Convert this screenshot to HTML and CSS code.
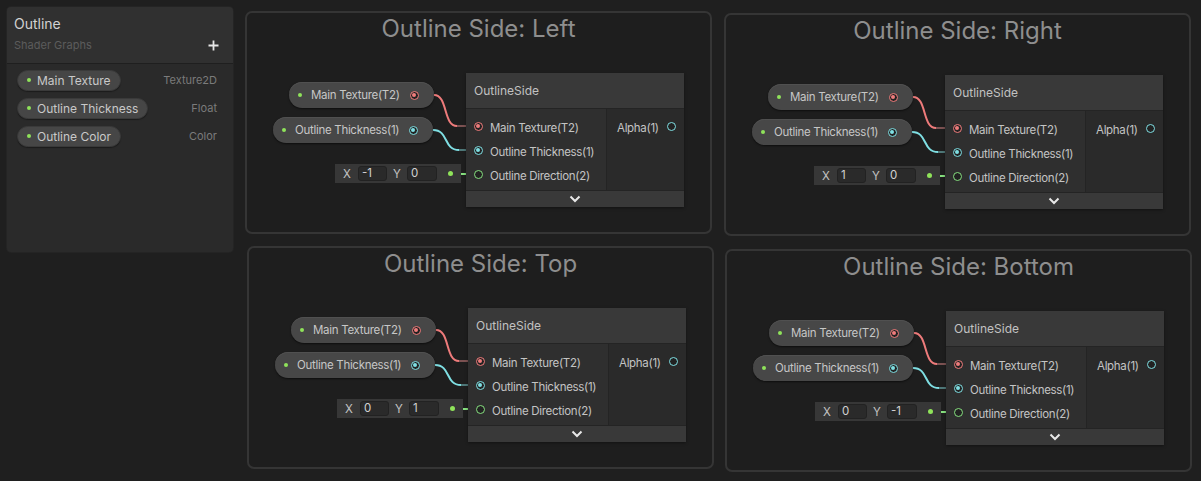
FILE: index.html
```html
<!DOCTYPE html>
<html>
<head>
<meta charset="utf-8">
<link rel="stylesheet" href="styles.css">
</head>
<body>
<div class="canvas">
  <aside class="blackboard">
    <div class="bb-header">
      <div class="bb-title">Outline</div>
      <div class="bb-sub"><span>Shader Graphs</span>
        <svg class="plus" width="11" height="11" viewBox="0 0 11 11"><path d="M5.5 0.5V10.5M0.5 5.5H10.5" stroke="#e6e6e6" stroke-width="1.8"/></svg>
      </div>
    </div>
    <div class="bb-body">
      <div class="bb-row"><span class="bb-pill"><span class="dot"></span>Main Texture</span><span class="bb-type">Texture2D</span></div>
      <div class="bb-row"><span class="bb-pill"><span class="dot"></span>Outline Thickness</span><span class="bb-type">Float</span></div>
      <div class="bb-row"><span class="bb-pill"><span class="dot"></span>Outline Color</span><span class="bb-type">Color</span></div>
    </div>
  </aside>

  <section class="group g1">
    <div class="group-title">Outline Side: Left</div>
    <svg class="edges" width="467" height="223">
      <path d="M189 84 C203 84 198 115 212 115" class="e-red"/><path d="M212 115 H228" class="e-red-dim"/>
      <path d="M188 119 C204 119 198 139 214 139" class="e-cyan"/><path d="M214 139 H228" class="e-cyan-dim"/>
      <path d="M206 163 H216" class="e-green-dim"/><path d="M216 163 H229" class="e-green"/>
    </svg>
    <div class="prop p1"><span class="dot"></span><span class="prop-label">Main Texture(T2)</span><span class="port red filled"></span></div>
    <div class="prop p2"><span class="dot"></span><span class="prop-label">Outline Thickness(1)</span><span class="port cyan filled"></span></div>
    <div class="vec"><span class="axis">X</span><span class="field">-1</span><span class="axis ay">Y</span><span class="field f2">0</span><span class="vec-dot"></span></div>
    <div class="node">
      <div class="node-title">OutlineSide</div>
      <div class="node-body">
        <div class="inputs">
          <div class="row"><span class="port red filled"></span><span>Main Texture(T2)</span></div>
          <div class="row"><span class="port cyan filled"></span><span>Outline Thickness(1)</span></div>
          <div class="row"><span class="port green"></span><span>Outline Direction(2)</span></div>
        </div>
        <div class="outputs">
          <div class="row"><span>Alpha(1)</span><span class="port cyan out"></span></div>
        </div>
      </div>
      <div class="node-footer"><svg width="12" height="8" viewBox="0 0 12 8"><path d="M1.5 1.5 L6 6 L10.5 1.5" fill="none" stroke="#e8e8e8" stroke-width="2"/></svg></div>
    </div>
  </section>

  <section class="group g2">
    <div class="group-title">Outline Side: Right</div>
    <svg class="edges" width="467" height="223">
      <path d="M189 84 C203 84 198 115 212 115" class="e-red"/><path d="M212 115 H228" class="e-red-dim"/>
      <path d="M188 119 C204 119 198 139 214 139" class="e-cyan"/><path d="M214 139 H228" class="e-cyan-dim"/>
      <path d="M206 163 H216" class="e-green-dim"/><path d="M216 163 H229" class="e-green"/>
    </svg>
    <div class="prop p1"><span class="dot"></span><span class="prop-label">Main Texture(T2)</span><span class="port red filled"></span></div>
    <div class="prop p2"><span class="dot"></span><span class="prop-label">Outline Thickness(1)</span><span class="port cyan filled"></span></div>
    <div class="vec"><span class="axis">X</span><span class="field">1</span><span class="axis ay">Y</span><span class="field f2">0</span><span class="vec-dot"></span></div>
    <div class="node">
      <div class="node-title">OutlineSide</div>
      <div class="node-body">
        <div class="inputs">
          <div class="row"><span class="port red filled"></span><span>Main Texture(T2)</span></div>
          <div class="row"><span class="port cyan filled"></span><span>Outline Thickness(1)</span></div>
          <div class="row"><span class="port green"></span><span>Outline Direction(2)</span></div>
        </div>
        <div class="outputs">
          <div class="row"><span>Alpha(1)</span><span class="port cyan out"></span></div>
        </div>
      </div>
      <div class="node-footer"><svg width="12" height="8" viewBox="0 0 12 8"><path d="M1.5 1.5 L6 6 L10.5 1.5" fill="none" stroke="#e8e8e8" stroke-width="2"/></svg></div>
    </div>
  </section>

  <section class="group g3">
    <div class="group-title">Outline Side: Top</div>
    <svg class="edges" width="467" height="223">
      <path d="M189 84 C203 84 198 115 212 115" class="e-red"/><path d="M212 115 H228" class="e-red-dim"/>
      <path d="M188 119 C204 119 198 139 214 139" class="e-cyan"/><path d="M214 139 H228" class="e-cyan-dim"/>
      <path d="M206 163 H216" class="e-green-dim"/><path d="M216 163 H229" class="e-green"/>
    </svg>
    <div class="prop p1"><span class="dot"></span><span class="prop-label">Main Texture(T2)</span><span class="port red filled"></span></div>
    <div class="prop p2"><span class="dot"></span><span class="prop-label">Outline Thickness(1)</span><span class="port cyan filled"></span></div>
    <div class="vec"><span class="axis">X</span><span class="field">0</span><span class="axis ay">Y</span><span class="field f2">1</span><span class="vec-dot"></span></div>
    <div class="node">
      <div class="node-title">OutlineSide</div>
      <div class="node-body">
        <div class="inputs">
          <div class="row"><span class="port red filled"></span><span>Main Texture(T2)</span></div>
          <div class="row"><span class="port cyan filled"></span><span>Outline Thickness(1)</span></div>
          <div class="row"><span class="port green"></span><span>Outline Direction(2)</span></div>
        </div>
        <div class="outputs">
          <div class="row"><span>Alpha(1)</span><span class="port cyan out"></span></div>
        </div>
      </div>
      <div class="node-footer"><svg width="12" height="8" viewBox="0 0 12 8"><path d="M1.5 1.5 L6 6 L10.5 1.5" fill="none" stroke="#e8e8e8" stroke-width="2"/></svg></div>
    </div>
  </section>

  <section class="group g4">
    <div class="group-title">Outline Side: Bottom</div>
    <svg class="edges" width="467" height="223">
      <path d="M189 84 C203 84 198 115 212 115" class="e-red"/><path d="M212 115 H228" class="e-red-dim"/>
      <path d="M188 119 C204 119 198 139 214 139" class="e-cyan"/><path d="M214 139 H228" class="e-cyan-dim"/>
      <path d="M206 163 H216" class="e-green-dim"/><path d="M216 163 H229" class="e-green"/>
    </svg>
    <div class="prop p1"><span class="dot"></span><span class="prop-label">Main Texture(T2)</span><span class="port red filled"></span></div>
    <div class="prop p2"><span class="dot"></span><span class="prop-label">Outline Thickness(1)</span><span class="port cyan filled"></span></div>
    <div class="vec"><span class="axis">X</span><span class="field">0</span><span class="axis ay">Y</span><span class="field f2">-1</span><span class="vec-dot"></span></div>
    <div class="node">
      <div class="node-title">OutlineSide</div>
      <div class="node-body">
        <div class="inputs">
          <div class="row"><span class="port red filled"></span><span>Main Texture(T2)</span></div>
          <div class="row"><span class="port cyan filled"></span><span>Outline Thickness(1)</span></div>
          <div class="row"><span class="port green"></span><span>Outline Direction(2)</span></div>
        </div>
        <div class="outputs">
          <div class="row"><span>Alpha(1)</span><span class="port cyan out"></span></div>
        </div>
      </div>
      <div class="node-footer"><svg width="12" height="8" viewBox="0 0 12 8"><path d="M1.5 1.5 L6 6 L10.5 1.5" fill="none" stroke="#e8e8e8" stroke-width="2"/></svg></div>
    </div>
  </section>
</div>
</body>
</html>
```
FILE: styles.css
```css
* { box-sizing: border-box; }
html, body { margin: 0; padding: 0; }
body {
  background: #1f1f1f;
  font-family: Inter, "Noto Sans", "Liberation Sans", sans-serif;
  width: 1201px;
  height: 481px;
  overflow: hidden;
  white-space: nowrap;
}
.canvas {
  position: relative;
  width: 1201px;
  height: 481px;
  padding: 7px;
}

/* Blackboard */
.blackboard {
  width: 226px;
  height: 245px;
  background: #2a2a2a;
  border-radius: 4px;
  overflow: hidden;
  box-shadow: 0 0 0 1px #242424;
}
.bb-header {
  height: 57px;
  background: #303030;
  border-bottom: 1px solid #1f1f1f;
  padding: 8px 14px 0 7px;
}
.bb-title {
  font-size: 14px;
  line-height: 17px;
  color: #d2d2d2;
}
.bb-sub {
  margin-top: 5px;
  height: 16px;
  display: flex;
  align-items: center;
  justify-content: space-between;
  font-size: 11px;
  color: #5c5c5c;
}
.plus { display: block; }
.bb-body {
  padding: 6px 16px 0 10px;
  display: flex;
  flex-direction: column;
  gap: 8px;
}
.bb-row {
  height: 20px;
  display: flex;
  align-items: center;
  justify-content: space-between;
}
.bb-pill {
  height: 21px;
  border-radius: 10.5px;
  background: #464646;
  border: 1px solid #3a3a3a;
  box-shadow: 0 1px 1px rgba(0,0,0,0.35);
  display: flex;
  align-items: center;
  gap: 6px;
  padding: 0 9px 0 9px;
  font-size: 12px;
  color: #c9c9c9;
}
.dot {
  width: 4px;
  height: 4px;
  border-radius: 50%;
  background: #8fe35a;
  flex: none;
}
.bb-type {
  font-size: 11px;
  color: #7b7b7b;
}

/* Groups */
.group {
  position: absolute;
  width: 467px;
  height: 223px;
  border: 2px solid #353535;
  border-radius: 7px;
  background: #1e1e1e;
}
.g1 { left: 245px; top: 11px; }
.g2 { left: 724px; top: 13px; }
.g3 { left: 247px; top: 246px; }
.g4 { left: 725px; top: 249px; }
.group-title {
  text-align: center;
  font-size: 24px;
  line-height: 28px;
  margin-top: 2px;
  color: #8e8e8e;
}
.edges {
  position: absolute;
  left: -2px;
  top: -2px;
  fill: none;
  stroke-width: 2;
}
.e-red { stroke: #ee7b7b; }
.e-red-dim { stroke: #7c5252; }
.e-cyan { stroke: #7fdfe3; }
.e-cyan-dim { stroke: #4f7879; }
.e-green { stroke: #86e07f; }
.e-green-dim { stroke: #4c5f4b; }

/* property nodes */
.prop {
  position: absolute;
  height: 26px;
  border-radius: 13px;
  background: #474747;
  box-shadow: 0 1px 2px rgba(0,0,0,0.55), inset 0 1px 0 #505050;
  display: flex;
  align-items: center;
  padding: 0 15px 0 9px;
  font-size: 11.5px;
  letter-spacing: -0.3px;
  color: #c6c6c6;
}
.prop .dot { margin-right: 9px; }
.prop-label { flex: none; }
.prop .port { margin-left: auto; }
.p1 { left: 42px; top: 69px; width: 145px; }
.p2 { left: 26px; top: 104px; width: 160px; }

/* ports */
.port {
  position: relative;
  flex: none;
  width: 9px;
  height: 9px;
  border-radius: 50%;
  border: 1.5px solid;
  background: #222;
}
.port.filled::after {
  content: "";
  position: absolute;
  left: 1px;
  top: 1px;
  width: 4px;
  height: 4px;
  border-radius: 50%;
  background: currentColor;
}
.red { color: #f07c7c; border-color: #f07c7c; }
.cyan { color: #7fdfe3; border-color: #7fdfe3; }
.green { color: #86e07f; border-color: #86e07f; }

/* vector2 inline */
.vec {
  position: absolute;
  left: 88px;
  top: 151px;
  width: 126px;
  height: 19px;
  background: #373737;
  display: flex;
  align-items: center;
  padding-left: 8px;
  font-size: 11.5px;
  color: #c4c4c4;
}
.axis { width: 8px; text-align: center; margin-right: 7px; }
.ay { margin-left: 6px; margin-right: 6px; }
.field {
  width: 29px;
  height: 15px;
  border-radius: 3px;
  background: #2a2a2a;
  border: 1px solid #222;
  padding-left: 3px;
  line-height: 13px;
  color: #d2d2d2;
}
.f2 { width: 30px; }
.vec-dot {
  margin-left: auto;
  margin-right: 8px;
  width: 5px;
  height: 5px;
  border-radius: 50%;
  background: #8fe35a;
}

/* main node */
.node {
  position: absolute;
  left: 219px;
  top: 60px;
  width: 218px;
  background: #2e2e2e;
  box-shadow: 0 1px 3px rgba(0,0,0,0.4);
  font-size: 11.5px;
  letter-spacing: -0.3px;
  color: #c4c4c4;
}
.node-title {
  height: 36px;
  background: #393939;
  border-bottom: 1px solid #242424;
  padding-left: 8px;
  display: flex;
  align-items: center;
  font-size: 12px;
  letter-spacing: 0;
  color: #c2c2c2;
}
.node-body {
  display: flex;
  height: 81px;
}
.inputs {
  width: 141px;
  background: #2f2f2f;
  border-right: 1px solid #242424;
  padding: 7px 0 0 8px;
}
.outputs {
  flex: 1;
  background: #2a2a2a;
  padding: 7px 8px 0 10px;
}
.row {
  height: 24px;
  display: flex;
  align-items: center;
  gap: 7px;
}
.inputs .port { margin-top: -3px; }
.outputs .port { margin-top: -3px; }
.outputs .row { justify-content: space-between; }
.node-footer {
  height: 17px;
  background: #393939;
  border-top: 1px solid #242424;
  display: flex;
  align-items: center;
  justify-content: center;
}
.node-footer svg { display: block; }
```
